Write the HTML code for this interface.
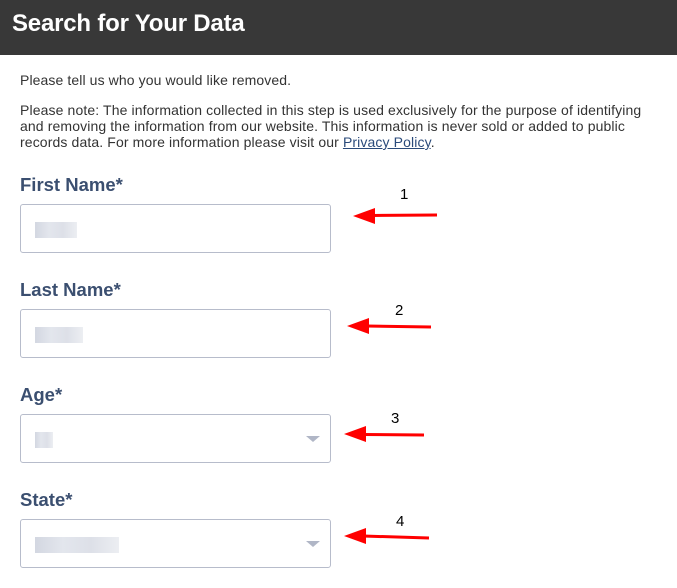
<!DOCTYPE html>
<html><head><meta charset="utf-8"><style>
*{margin:0;padding:0;box-sizing:border-box}
body{width:677px;height:588px;background:#fff;font-family:"Liberation Sans",sans-serif;position:relative;overflow:hidden}
.hd{position:absolute;left:0;top:0;width:677px;height:55px;background:#383838}
.hd h1{position:absolute;left:12px;top:10px;color:#fff;font-size:24px;font-weight:bold;letter-spacing:-0.2px}
.t{position:absolute;left:20px;font-size:14px;color:#333;white-space:nowrap;line-height:16px}
.lb{position:absolute;left:20px;font-size:18.5px;font-weight:bold;color:#3b4f70;white-space:nowrap}
.bx{position:absolute;left:20px;width:311px;height:49px;border:1px solid #b7bccb;border-radius:3px;background:#fff}
.bl{position:absolute;top:17px;left:14px;height:16px;background:linear-gradient(90deg,#d3d7e1,#e3e6ed,#dde0e8,#eceef2);}
.car{position:absolute;right:10px;top:21px;width:0;height:0;border-left:7px solid transparent;border-right:7px solid transparent;border-top:6px solid #b0b6c6}
.n{position:absolute;font-size:15px;color:#000;font-family:"Liberation Sans",sans-serif}
a{color:#2a4a7a}
</style></head><body>
<div class="hd"><h1>Search for Your Data</h1></div>
<div class="t" style="top:72px;letter-spacing:0.1px">Please tell us who you would like removed.</div>
<div class="t" style="top:102px;letter-spacing:0.12px">Please note: The information collected in this step is used exclusively for the purpose of identifying</div>
<div class="t" style="top:118px;letter-spacing:0.12px">and removing the information from our website. This information is never sold or added to public</div>
<div class="t" style="top:134px;letter-spacing:0.12px">records data. For more information please visit our <a href="#">Privacy Policy</a>.</div>

<div class="lb" style="top:174px">First Name*</div>
<div class="bx" style="top:204px"><div class="bl" style="width:42px"></div></div>
<div class="lb" style="top:279px">Last Name*</div>
<div class="bx" style="top:309px"><div class="bl" style="width:48px"></div></div>
<div class="lb" style="top:384px">Age*</div>
<div class="bx" style="top:414px"><div class="bl" style="width:18px"></div><div class="car"></div></div>
<div class="lb" style="top:489px">State*</div>
<div class="bx" style="top:519px"><div class="bl" style="width:84px"></div><div class="car"></div></div>

<svg style="position:absolute;left:0;top:0" width="677" height="588">
<g fill="#f00" stroke="#f00">
<line x1="372" y1="215.5" x2="437" y2="215" stroke-width="3"/><polygon points="353,216 375,208 375,224" stroke="none"/>
<line x1="366" y1="326" x2="431" y2="327" stroke-width="3"/><polygon points="347,326 369,318 369,334" stroke="none"/>
<line x1="363" y1="434.5" x2="424" y2="435" stroke-width="3"/><polygon points="344,434 366,426 366,442" stroke="none"/>
<line x1="363" y1="536" x2="429" y2="538" stroke-width="3"/><polygon points="344,536 366,528 366,544" stroke="none"/>
</g>
</svg>
<div class="n" style="left:400px;top:186px">1</div>
<div class="n" style="left:395px;top:302px">2</div>
<div class="n" style="left:391px;top:410px">3</div>
<div class="n" style="left:396px;top:513px">4</div>
</body></html>
